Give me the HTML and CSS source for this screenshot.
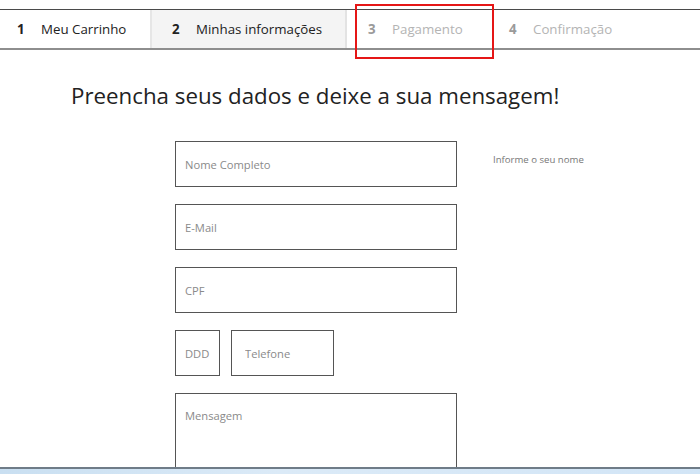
FILE: index.html
```html
<!DOCTYPE html>
<html lang="pt-BR">
<head>
<meta charset="utf-8">
<title>Minhas informações</title>
<link rel="stylesheet" href="styles.css">
</head>
<body>
<nav class="steps">
  <div class="step step-1"><span class="num">1</span><span class="label">Meu Carrinho</span></div>
  <div class="step step-2 current"><span class="num">2</span><span class="label">Minhas informações</span></div>
  <div class="step step-3 disabled"><span class="num">3</span><span class="label">Pagamento</span></div>
  <div class="step step-4 disabled"><span class="num">4</span><span class="label">Confirmação</span></div>
  <div class="highlight"></div>
</nav>
<main class="content">
  <h1 class="title">Preencha seus dados e deixe a sua mensagem!</h1>
  <form class="form">
    <div class="row">
      <input class="field" type="text" placeholder="Nome Completo">
      <span class="hint">Informe o seu nome</span>
    </div>
    <div class="row">
      <input class="field" type="text" placeholder="E-Mail">
    </div>
    <div class="row">
      <input class="field" type="text" placeholder="CPF">
    </div>
    <div class="row phone">
      <input class="field ddd" type="text" placeholder="DDD">
      <input class="field tel" type="text" placeholder="Telefone">
    </div>
    <div class="row">
      <textarea class="field message" placeholder="Mensagem"></textarea>
    </div>
  </form>
</main>
<div class="taskbar"></div>
</body>
</html>
```
FILE: styles.css
```css
html, body {
  margin: 0;
  padding: 0;
  background: #fff;
  font-family: "Open Sans", "Liberation Sans", sans-serif;
  overflow: hidden;
}
.steps {
  position: relative;
  margin-top: 9px;
  height: 38px;
  border-top: 1px solid #4a4a4a;
  border-bottom: 2px solid #8e8e8e;
  display: flex;
  align-items: stretch;
  font-size: 13.3px;
  color: #222;
}
.step {
  display: flex;
  align-items: center;
  box-sizing: border-box;
  padding-left: 21px;
}
.step .num {
  display: inline-block;
  width: 24px;
  font-weight: 700;
}
.step-1 { width: 150px; padding-left: 17px; }
.step-2 {
  width: 197px;
  background: #f4f4f4;
  border-left: 2px solid #e6e6e6;
  border-right: 2px solid #e3e3e3;
  padding-left: 20px;
}
.step-3 { width: 141px; }
.step-4 { flex: 1; }
.disabled { color: #b4b4b4; }
.disabled .num { color: #9a9a9a; }
.highlight {
  position: absolute;
  left: 355px;
  top: -6px;
  width: 135px;
  height: 51px;
  border: 2px solid #e51616;
}
.content {
  padding: 0 0 0 71px;
}
.title {
  margin: 31px 0 0;
  font-size: 22.3px;
  font-weight: 400;
  line-height: 30px;
  color: #222;
}
.form {
  margin: 30px 0 0 104px;
  display: flex;
  flex-direction: column;
  gap: 17px;
}
.row {
  display: flex;
  align-items: flex-start;
  gap: 36px;
}
.field {
  box-sizing: border-box;
  width: 282px;
  height: 46px;
  border: 1px solid #555;
  border-radius: 0;
  padding: 0 9px;
  font-family: "Open Sans", "Liberation Sans", sans-serif;
  font-size: 11.2px;
  color: #333;
  background: #fff;
  outline: none;
}
.field::placeholder { color: #8a8a8a; }
.phone { gap: 11px; }
.ddd { width: 45px; }
.tel { width: 103px; padding-left: 13px; }
.message {
  height: 90px;
  padding-top: 14px;
  resize: none;
}
.hint {
  margin-top: 12px;
  font-size: 9.6px;
  color: #777;
}
.taskbar {
  position: fixed;
  left: 0;
  right: 0;
  bottom: 0;
  height: 5px;
  border-top: 2px solid #6f7c88;
  background: linear-gradient(90deg, #c9dff1, #dbeaf7 40%, #d2e5f6);
}
```
